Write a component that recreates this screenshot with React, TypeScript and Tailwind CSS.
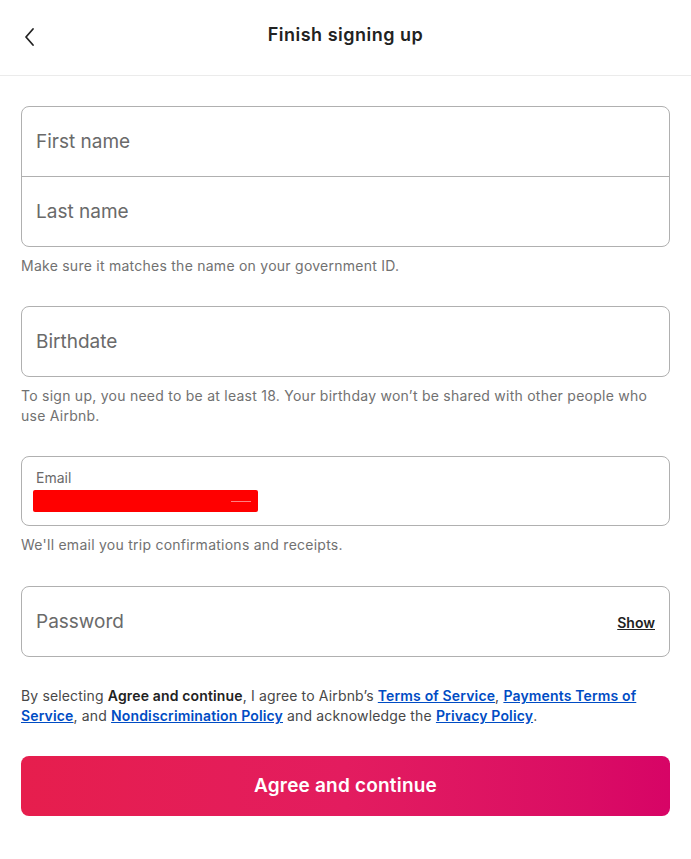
import { useState } from "react";

function Field({ placeholder, right }: { placeholder: string; right?: React.ReactNode }) {
  return (
    <div className="flex h-[69px] items-center justify-between px-[14px] pt-px">
      <input
        placeholder={placeholder}
        className="w-full bg-transparent text-[19px] text-[#222222] placeholder:text-[#6a6a6a] focus:outline-none"
      />
      {right}
    </div>
  );
}

function Helper({ children }: { children: React.ReactNode }) {
  return <p className="mt-[9px] text-[14px] leading-5 tracking-[0.25px] text-[#717171]">{children}</p>;
}

function TermsLink({ children }: { children: React.ReactNode }) {
  return (
    <a href="#" className="font-semibold text-[#004cc4] underline">
      {children}
    </a>
  );
}

export default function App() {
  const [showPw, setShowPw] = useState(false);

  return (
    <div className="min-h-screen bg-white text-[#222222] font-['Inter',sans-serif]">
      {/* Header */}
      <header className="relative flex h-[76px] items-center justify-center border-b border-[#ebebeb]">
        <button className="absolute left-[19px] top-[23px] p-1">
          <svg width="14" height="20" viewBox="0 0 14 20" fill="none">
            <path d="M10 2 L3 10 L10 18" stroke="#222222" strokeWidth="1.8" strokeLinecap="round" strokeLinejoin="round" />
          </svg>
        </button>
        <h1 className="-mt-[6px] text-[18px] font-semibold tracking-[0.5px]">Finish signing up</h1>
      </header>

      <main className="px-[21px] pt-[30px]">
        {/* Name */}
        <div className="overflow-hidden rounded-lg border border-[#b0b0b0]">
          <Field placeholder="First name" />
          <div className="border-t border-[#b0b0b0]" />
          <Field placeholder="Last name" />
        </div>
        <Helper>Make sure it matches the name on your government ID.</Helper>

        {/* Birthdate */}
        <div className="mt-[30px] rounded-lg border border-[#b0b0b0]">
          <Field placeholder="Birthdate" />
        </div>
        <Helper>
          To sign up, you need to be at least 18. Your birthday won’t be shared with other people who use Airbnb.
        </Helper>

        {/* Email */}
        <div className="mt-[30px] flex h-[70px] flex-col rounded-lg border border-[#b0b0b0] px-[11px] pt-[12px]">
          <span className="px-[3px] text-[14px] leading-[18px] text-[#6a6a6a]">Email</span>
          <div className="mt-[3px] flex h-[22px] w-[225px] items-center justify-end rounded-[2px] bg-[#ff0000] pr-[7px]">
            <span className="h-px w-[20px] bg-[#ff8080]" />
          </div>
        </div>
        <Helper>We'll email you trip confirmations and receipts.</Helper>

        {/* Password */}
        <div className="mt-[31px] rounded-lg border border-[#b0b0b0]">
          <Field
            placeholder="Password"
            right={
              <button
                onClick={() => setShowPw(!showPw)}
                className="text-[14px] font-semibold text-[#222222] underline"
              >
                Show
              </button>
            }
          />
        </div>

        {/* Terms */}
        <p className="mt-[29px] text-[14px] leading-5 tracking-[0.15px] text-[#484848]">
          By selecting <span className="font-semibold text-[#222222]">Agree and continue</span>, I agree to Airbnb’s{" "}
          <TermsLink>Terms of Service</TermsLink>, <TermsLink>Payments Terms of Service</TermsLink>, and{" "}
          <TermsLink>Nondiscrimination Policy</TermsLink> and acknowledge the <TermsLink>Privacy Policy</TermsLink>.
        </p>

        <button className="mt-[30px] flex h-[60px] w-full items-center justify-center rounded-lg bg-gradient-to-r from-[#e61e4d] via-[#e31c5f] to-[#d70466] text-[19px] font-semibold tracking-[0.2px] text-white">
          Agree and continue
        </button>
      </main>
    </div>
  );
}
